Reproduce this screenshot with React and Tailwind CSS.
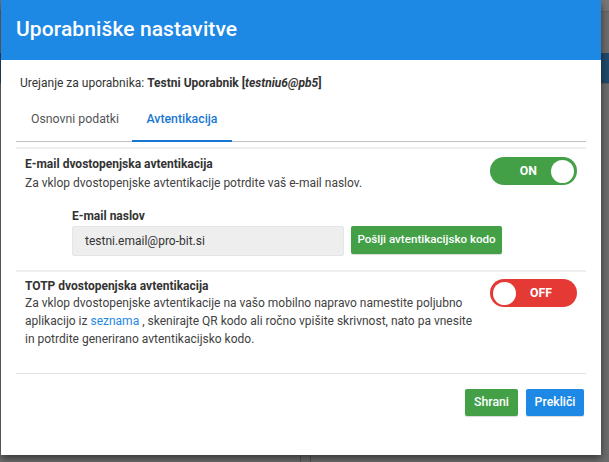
export default function App() {
  return (
    <div className="relative w-[609px] h-[462px] overflow-hidden bg-[#6d6d6d] font-['Roboto',sans-serif]">
      {/* page underneath the modal overlay */}
      <div className="absolute left-0 right-0 top-0 h-[12px] bg-[#777777] border-b border-[#626262]" />
      <div className="absolute left-0 right-0 top-[53px] h-[31px] bg-[#224a6b] border-b border-[#5c5c5c]" />
      <div className="absolute left-[300px] top-[440px] bottom-0 w-px bg-[#555555]" />
      <div className="absolute left-[310px] top-[440px] bottom-0 w-px bg-[#555555]" />

      {/* dialog */}
      <div className="relative ml-[1px] w-[600px] h-[455px] bg-white flex flex-col shadow-[0_3px_8px_rgba(0,0,0,0.55)]">
        <div className="h-[60px] bg-[#1e88e5] flex items-center px-[15px]">
          <h1 className="text-white text-[21px] font-medium tracking-[0.1px]">Uporabniške nastavitve</h1>
        </div>

        <div className="flex flex-col px-[15px]">
          <div className="pt-[14px] pl-[4px] text-[12px] leading-[18px] text-[#333333]">
            Urejanje za uporabnika:{" "}
            <span className="font-bold">
              Testni Uporabnik [<span className="italic">testniu6@pb5</span>]
            </span>
          </div>

          {/* tabs */}
          <div className="mt-[6px] h-[44px] flex border-b border-[#c2c2c2]">
            <div className="w-[116px] pl-[15px] flex items-center text-[12.3px] text-[#555555]">Osnovni podatki</div>
            <div className="w-[100px] flex items-center justify-center text-[12.3px] font-medium text-[#1976d2] border-b-2 border-[#1976d2] -mb-px">
              Avtentikacija
            </div>
          </div>
          <div className="mt-[5px] h-[2px] bg-[#eeeeee]" />

          {/* e-mail 2FA */}
          <div className="px-[9px] pt-[6px] pb-[14px]">
            <div className="flex items-start justify-between">
              <div className="text-[12px] leading-[19px] text-[#333333]">
                <div className="font-bold">E-mail dvostopenjska avtentikacija</div>
                <div className="text-[#424242]">Za vklop dvostopenjske avtentikacije potrdite vaš e-mail naslov.</div>
              </div>
              <div className="mt-[2px] w-[87px] h-[28px] rounded-full bg-[#43a047] flex items-center justify-end pr-[3px] gap-[14px]">
                <span className="text-white text-[12.3px] font-bold">ON</span>
                <span className="w-[23px] h-[23px] rounded-full bg-white" />
              </div>
            </div>
            <div className="pl-[47px] mt-[14px]">
              <div className="text-[12px] leading-[18px] font-bold text-[#333333]">E-mail naslov</div>
              <div className="mt-px flex items-start gap-[7px]">
                <div className="w-[272px] h-[30px] bg-[#eeeeee] border border-[#e2e6ea] rounded-[2px] flex items-center pl-[12px] text-[12px] text-[#333333]">
                  testni.email@pro-bit.si
                </div>
                <button className="h-[28px] w-[151px] bg-[#43a047] rounded-[2px] text-white text-[11.6px] font-medium shadow-[0_1px_1px_rgba(0,0,0,0.15)]">
                  Pošlji avtentikacijsko kodo
                </button>
              </div>
            </div>
          </div>

          <div className="h-[2px] bg-[#eeeeee]" />

          {/* TOTP 2FA */}
          <div className="px-[9px] pt-[6px] pb-[25px] flex items-start justify-between">
            <div className="text-[12px] text-[#333333] whitespace-nowrap">
              <div className="font-bold leading-[16px]">TOTP dvostopenjska avtentikacija</div>
              <div className="text-[#424242] leading-[18px]">
                Za vklop dvostopenjske avtentikacije na vašo mobilno napravo namestite poljubno
                <br />
                aplikacijo iz <span className="text-[#1e88e5]">seznama</span> , skenirajte QR kodo ali ročno vpišite skrivnost, nato pa vnesite
                <br />
                in potrdite generirano avtentikacijsko kodo.
              </div>
            </div>
            <div className="mt-[1px] w-[87px] h-[28px] rounded-full bg-[#e53935] flex items-center pl-[3px] gap-[14px]">
              <span className="w-[23px] h-[23px] rounded-full bg-white" />
              <span className="text-white text-[12.3px] font-bold">OFF</span>
            </div>
          </div>

          <div className="h-px bg-[#e3e3e3]" />

          {/* footer actions */}
          <div className="pt-[15px] pr-[2px] flex justify-end gap-[8px]">
            <button className="w-[53px] h-[27px] bg-[#43a047] rounded-[2px] text-white text-[12.3px] font-medium shadow-[0_1px_1px_rgba(0,0,0,0.15)]">
              Shrani
            </button>
            <button className="w-[58px] h-[27px] bg-[#1e88e5] rounded-[2px] text-white text-[12.3px] font-medium shadow-[0_1px_1px_rgba(0,0,0,0.15)]">
              Prekliči
            </button>
          </div>
        </div>
      </div>
    </div>
  );
}
